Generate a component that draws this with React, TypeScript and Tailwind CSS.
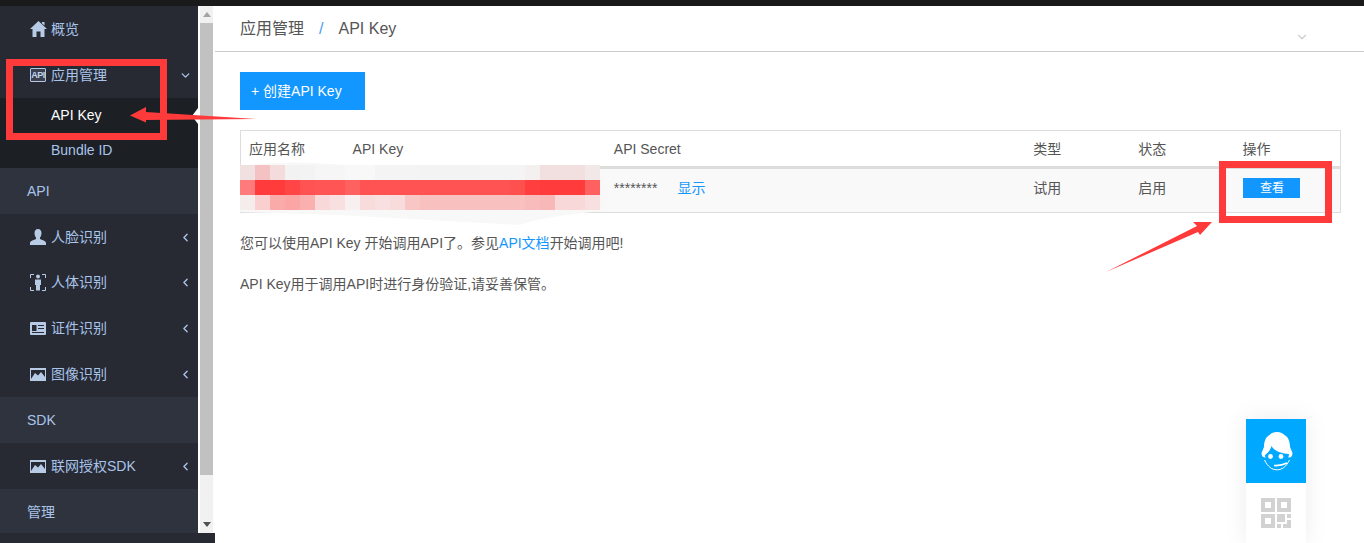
import { ChevronDown, ChevronLeft } from 'lucide-react';
import type { ReactNode } from 'react';

const FONT = 'font-["Liberation_Sans","Noto_Sans_CJK_SC",sans-serif]';

function HomeIcon() {
  return (
    <svg width="17" height="16" viewBox="0 0 17 16" fill="#b8cbe6">
      <path d="M8.500 0L17 8H14.500V16H10.500V10.500H6.500V16H2.500V8H0Z" />
      <path d="M12 1H14.500V4.500L12 2.500Z" />
    </svg>
  );
}

function UserIcon() {
  return (
    <svg width="16" height="16" viewBox="0 0 16 16" fill="#b8cbe6">
      <path d="M8 0C10.300 0 11.500 1.700 11.500 4C11.500 6.300 10.500 8 10 8.500V10C11.500 11 16 11.500 16 14V16H0V14C0 11.500 4.500 11 6 10V8.500C5.500 8 4.500 6.300 4.500 4C4.500 1.700 5.700 0 8 0Z" />
    </svg>
  );
}

function ApiIcon() {
  return (
    <span className="flex h-[14px] w-[16px] items-center justify-center rounded-[1px] border border-[#b4c8e4] bg-[#3a4050] text-[9px] leading-none font-bold tracking-[-0.5px] text-[#c5d5ea]">
      API
    </span>
  );
}

function BodyIcon() {
  return (
    <svg width="16" height="17" viewBox="0 0 16 17" className="text-[#b8cbe6]">
      <path d="M0.5 4V0.5H4M12 0.5H15.5V4M0.5 13V16.5H4M12 16.5H15.5V13" fill="none" stroke="currentColor" />
      <circle cx="8" cy="2.500" r="2" fill="currentColor" />
      <path d="M5 5.500H11V11H10V16.500H6V11H5Z" fill="currentColor" />
    </svg>
  );
}

function CardIcon() {
  return (
    <svg width="16" height="13" viewBox="0 0 16 13">
      <rect width="16" height="13" rx="1" fill="#b8cbe6" />
      <rect x="2" y="3" width="4.500" height="6" fill="#272a33" />
      <path d="M8 3.500H14M8 6.500H14M2 10.500H14" stroke="#272a33" strokeWidth="1" />
    </svg>
  );
}

function ImageIcon() {
  return (
    <svg width="16" height="13" viewBox="0 0 16 13">
      <rect width="16" height="13" fill="#b8cbe6" />
      <path d="M1 11V2H15V9L11 4L8 7.500L5 5Z" fill="#272a33" />
    </svg>
  );
}

type Row = { label: string; icon?: ReactNode; kind: 'item' | 'section'; height: string; chevron?: 'left' | 'down' };

const topRows: Row[] = [
  { label: '概览', kind: 'item', height: 'h-[46px]', icon: <HomeIcon /> },
  { label: '应用管理', kind: 'item', height: 'h-[46px]', icon: <ApiIcon />, chevron: 'down' },
];

const bottomRows: Row[] = [
  { label: 'API', kind: 'section', height: 'h-[46px]' },
  { label: '人脸识别', kind: 'item', height: 'h-[46px]', icon: <UserIcon />, chevron: 'left' },
  { label: '人体识别', kind: 'item', height: 'h-[45px] pb-px', icon: <BodyIcon />, chevron: 'left' },
  { label: '证件识别', kind: 'item', height: 'h-[46px]', icon: <CardIcon />, chevron: 'left' },
  { label: '图像识别', kind: 'item', height: 'h-[46px]', icon: <ImageIcon />, chevron: 'left' },
  { label: 'SDK', kind: 'section', height: 'h-[46px]' },
  { label: '联网授权SDK', kind: 'item', height: 'h-[46px]', icon: <ImageIcon />, chevron: 'left' },
  { label: '管理', kind: 'section', height: 'h-[44px] pt-[2px]' },
];

function MenuRow({ row }: { row: Row }) {
  if (row.kind === 'section') {
    return (
      <div className={`flex items-center bg-[#2f333d] pl-[27px] text-sm text-[#a9c4ea] ${row.height}`}>{row.label}</div>
    );
  }
  return (
    <div className={`flex items-center pl-[30px] text-sm text-[#a9c4ea] ${row.height}`}>
      <span className="flex w-[21px] items-center text-[#b8cbe6]">{row.icon}</span>
      <span>{row.label}</span>
      {row.chevron === 'left' && <ChevronLeft size={13} strokeWidth={2.5} className="absolute left-[179px] text-[#a9c4ea]" />}
      {row.chevron === 'down' && <ChevronDown size={13} strokeWidth={2.5} className="absolute left-[179px] text-[#a9c4ea]" />}
    </div>
  );
}

function Sidebar() {
  return (
    <div className="flex w-[215px] shrink-0 flex-col bg-[#272a33]">
      <div className="flex h-[527px]">
        <nav className="relative w-[198px] overflow-hidden">
          {topRows.map((row) => (
            <MenuRow key={row.label} row={row} />
          ))}
          <div className="bg-[#1c1f24] text-sm">
            <div className="relative flex h-[35px] items-center pb-[2px] pl-[51px] text-white">
              API Key
              <span className="absolute top-[10px] right-0 h-0 w-0 border-y-[8px] border-r-[6px] border-y-transparent border-r-white" />
            </div>
            <div className="flex h-[35px] items-center pb-[2px] pl-[51px] text-[#a9c4ea]">Bundle ID</div>
          </div>
          {bottomRows.map((row) => (
            <MenuRow key={row.label} row={row} />
          ))}
        </nav>
        {/* scrollbar */}
        <div className="flex w-[17px] flex-col bg-white pr-[2px] pl-[2px]">
          <div className="flex h-[17px] items-center justify-center bg-[#f1f1f1]">
            <svg width="8" height="5" viewBox="0 0 8 5"><path d="M4 0L8 5H0Z" fill="#a3a3a3" /></svg>
          </div>
          <div className="h-[452px] bg-[#c1c1c1]" />
          <div className="flex flex-1 items-end justify-center bg-[#f1f1f1] pb-[6px]">
            <svg width="8" height="5" viewBox="0 0 8 5"><path d="M0 0H8L4 5Z" fill="#505050" /></svg>
          </div>
        </div>
      </div>
    </div>
  );
}

const mosaic = [
  ['#f0e0e0', '#f4c2c2', '#f4dcdc', '#f2f2f2', '#f3f3f3', '#f6f6f6', '#f6f6f6', '#f8f8f8', '#f8f8f8', '#f4f4f4', '#f4f4f4', '#f4f4f4', '#f3f3f3', '#f3f3f3', '#f3f3f3', '#f3f3f3', '#f4f4f4', '#f4f4f4', '#f4f4f4', '#f5f0f0', '#f2e0e0', '#f2dfdf', '#f2dfdf', '#f3e8e8'],
  ['#ff7a7a', '#ff3b3b', '#ff3b3b', '#ff4545', '#ff5252', '#ff5555', '#ff5555', '#ff6060', '#ff5252', '#ff5252', '#ff5252', '#ff5252', '#ff5252', '#ff5252', '#ff5252', '#ff5252', '#ff5252', '#ff5252', '#ff5050', '#ff3f3f', '#ff3b3b', '#ff3b3b', '#ff3b3b', '#ff6060'],
  ['#f5ecec', '#f9cfcf', '#fbaaaa', '#fba5a5', '#fbb0b0', '#f8d8d8', '#f8e0e0', '#f8f0f0', '#f8dcdc', '#f8e0e0', '#f8dcdc', '#f9c6c6', '#f9c0c0', '#f9c0c0', '#f9c0c0', '#f9c0c0', '#f9c0c0', '#f9c0c0', '#f9c0c0', '#f9bcbc', '#f8b8b8', '#f8d8d8', '#f8d8d8', '#f8e0e0'],
];

function Redaction() {
  return (
    <svg className="absolute top-[155px] left-[240px]" width="370" height="72" viewBox="0 0 370 72">
      <path d="M0 12 Q40 4 105 10 L120 12 Q200 8 245 15 L360 18 L370 40 L362 56 Q300 62 280 70 L100 60 L0 57Z" fill="#f8f8f8" />
      {mosaic.map((cells, r) =>
        cells.map((fill, c) => <rect key={`${r}-${c}`} x={c * 15} y={10 + r * 15} width="15" height="15" fill={fill} />),
      )}
    </svg>
  );
}

function Annotations() {
  return (
    <>
      <div className="absolute top-[59px] left-[6px] h-[81px] w-[161px] border-[7px] border-[#ff3a3a]" />
      <div className="absolute top-[161px] left-[1219px] h-[62px] w-[113px] border-[7px] border-[#ff3a3a]" />
      <svg className="absolute inset-0" width="1364" height="543" viewBox="0 0 1364 543">
        <polygon points="130,115.500 146,107 146,112 256,119 146,120 146,122.500" fill="#ff3a3a" />
        <polygon points="1106,272 1197,226 1193,222 1212,222 1200,235 1198,232" fill="#ff3a3a" />
      </svg>
    </>
  );
}

function FloatPanel() {
  return (
    <div className="absolute top-[419px] left-[1246px] h-[124px] w-[60px] bg-white shadow-[0_0_24px_rgba(0,0,0,0.08)]">
      <div className="flex h-[64px] items-center justify-center bg-[#00a9ff] pl-[2px]">
        <svg width="32" height="39" viewBox="0 0 32 39">
          {/* hair */}
          <path d="M16 0C12 0 10 1.500 8.500 3C4.500 5 3 10 3 15L0.500 21C0.500 24 2 25.500 4 25.500H28C30 25.500 31.500 24 31.500 21L29 15C29 10 27.500 5 23.500 3C22 1.500 20 0 16 0Z" fill="#fff" />
          {/* face */}
          <path d="M10.500 14C13 19 20 21.500 28 22C27.500 29 22 35 16 35C10 35 4.500 29 4 23C7 21 9.500 18 10.500 14Z" fill="#00a9ff" />
          <circle cx="9.500" cy="24.500" r="2.400" fill="#fff" />
          <circle cx="20" cy="24.500" r="2.400" fill="#fff" />
          <path d="M13 33.500C17 33.800 22 33 26 31" fill="none" stroke="#fff" strokeWidth="1.600" />
          <path d="M3.500 28C7 35 11 37.800 16 37.800C21 37.800 25 35 28.500 28" fill="none" stroke="#fff" strokeWidth="1" />
        </svg>
      </div>
      <div className="flex justify-center pt-[15px]">
        <svg width="30" height="30" viewBox="0 0 30 30" fill="#d2d2d2">
          <path fillRule="evenodd" d="M0 0H14V14H0ZM4 4V10H10V4Z" />
          <path fillRule="evenodd" d="M16 0H30V14H16ZM20 4V10H26V4Z" />
          <path fillRule="evenodd" d="M0 16H14V30H0ZM4 20V26H10V20Z" />
          <path d="M16 16H24V24H16ZM26 16H30V20H26ZM26 22H30V30H22V26H26ZM16 26H20V30H16Z" />
        </svg>
      </div>
    </div>
  );
}

export default function App() {
  return (
    <div className={`relative flex h-[543px] w-[1364px] flex-col overflow-hidden bg-white ${FONT}`}>
      <div className="h-[6px] shrink-0 bg-[#1a1a1a]" />
      <div className="flex flex-1">
        <Sidebar />
        <main className="flex-1 text-[#555]">
          <header className="flex h-[46px] items-center border-b border-[#ccc] pl-[25px] text-base">
            <span>应用管理</span>
            <span className="mx-[15px] text-[#4a9cf0]">/</span>
            <span>API Key</span>
          </header>
          <div className="pt-5 pl-[25px]">
            <button className="flex h-[38px] w-[125px] items-center bg-[#1296ff] pl-[11px] text-sm text-white">+ 创建API Key</button>
            <table className="mt-5 w-[1101px] table-fixed border border-[#ddd] text-left text-sm">
              <colgroup>
                <col className="w-[104px]" />
                <col className="w-[261px]" />
                <col className="w-[419px]" />
                <col className="w-[105px]" />
                <col className="w-[104px]" />
                <col className="w-[106px]" />
              </colgroup>
              <thead>
                <tr className="h-[37px] border-b-[3px] border-[#ddd]">
                  <th className="pl-2 font-normal">应用名称</th>
                  <th className="pl-2 font-normal">API Key</th>
                  <th className="pl-2 font-normal">API Secret</th>
                  <th className="pl-2 font-normal">类型</th>
                  <th className="pl-2 font-normal">状态</th>
                  <th className="pl-2 font-normal">操作</th>
                </tr>
              </thead>
              <tbody>
                <tr className="h-[45px] bg-[#f9f9f9]">
                  <td />
                  <td />
                  <td className="pb-[6px] pl-2">
                    ********
                    <span className="ml-5 text-[#1296ff]">显示</span>
                  </td>
                  <td className="pb-[6px] pl-2">试用</td>
                  <td className="pb-[6px] pl-2">启用</td>
                  <td className="pb-[6px] pl-[9px]">
                    <button className="h-5 w-[57px] bg-[#1296ff] text-xs text-white">查看</button>
                  </td>
                </tr>
              </tbody>
            </table>
            <p className="mt-5 text-sm leading-5">
              您可以使用API Key 开始调用API了。参见<span className="text-[#1296ff]">API文档</span>开始调用吧!
            </p>
            <p className="mt-[21px] text-sm leading-5">API Key用于调用API时进行身份验证,请妥善保管。</p>
          </div>
        </main>
      </div>
      <ChevronDown size={14} className="absolute top-[30px] left-[1295px] text-[#ccc]" />
      <Redaction />
      <Annotations />
      <FloatPanel />
    </div>
  );
}
